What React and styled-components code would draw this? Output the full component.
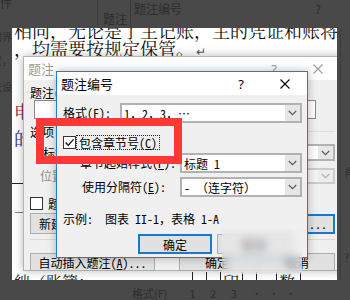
import React from 'react';
import styled, { createGlobalStyle } from 'styled-components';

const GlobalStyle = createGlobalStyle`
  html, body {
    margin: 0;
    padding: 0;
    background: #494949;
  }
  body {
    font-family: "Noto Sans CJK SC", "Noto Sans", sans-serif;
  }
`;

const uiFont = `"Noto Sans Mono CJK SC", "Noto Sans CJK SC", sans-serif`;
const docFont = `"Noto Serif CJK SC", "Noto Sans CJK SC", serif`;

const Stage = styled.div`
  position: relative;
  width: 350px;
  height: 300px;
  overflow: hidden;
  background: #494949;
  display: grid;
  grid-template-columns: 12px 325px 1fr;
  grid-template-rows: 28px 252px 1fr;
`;

/* ---------- dimmed surroundings ---------- */

const TopBand = styled.div`
  grid-column: 1 / -1;
  display: flex;
  color: #2d2d2d;
  font-size: 12px;
  line-height: 14px;
`;

const BandCell = styled.div`
  width: ${(p) => (p.$w ? `${p.$w}px` : 'auto')};
  flex: ${(p) => (p.$w ? 'none' : '1')};
  display: flex;
  align-items: ${(p) => p.$align || 'flex-start'};
  justify-content: space-between;
  padding: ${(p) => p.$pad || '0'};
  box-sizing: border-box;
  overflow: hidden;
`;

const BandLine = styled.div`
  width: 1px;
  background: #3a3a3a;
`;

const LeftBand = styled.div`
  grid-row: 2;
  grid-column: 1;
  display: flex;
  flex-direction: column;
  align-items: flex-end;
  overflow: hidden;
  color: #2f2f2f;
  font-size: 10px;
  line-height: 12px;
  white-space: nowrap;
`;

const BandText = styled.div`
  margin-top: ${(p) => p.$mt || 0}px;
`;

const RightBand = styled.div`
  grid-row: 2;
  grid-column: 3;
  display: flex;
  flex-direction: column;
  color: #2f2f2f;
  font-size: 11px;
  line-height: 13px;
  padding-left: 3px;
  border-left: 1px solid #3d3d3d;
  margin-left: 3px;
`;

const BottomBand = styled.div`
  grid-column: 1 / -1;
  display: flex;
  align-items: flex-end;
  color: #2d2d2d;
  font-size: 11px;
  line-height: 14px;
  overflow: hidden;
`;

const BottomItem = styled.span`
  margin-left: ${(p) => p.$ml}px;
  letter-spacing: ${(p) => p.$ls || 0}px;
`;

/* ---------- document page ---------- */

const Page = styled.div`
  grid-row: 2;
  grid-column: 2;
  position: relative;
  overflow: hidden;
  background: #ffffff;
  display: flex;
  flex-direction: column;
  font-family: ${docFont};
  color: #111;
`;

const DocLine = styled.div`
  font-size: 18px;
  line-height: 18px;
  height: 18px;
  white-space: nowrap;
  padding-left: 2px;
  margin-top: ${(p) => p.$mt || 0}px;
  color: ${(p) => p.$color || '#111'};
`;

const ParaMark = styled.span`
  font-size: 12px;
  color: #555;
  margin-left: 2px;
`;

const TableRule = styled.div`
  width: 12px;
  border-top: 1px solid #222;
  margin-top: ${(p) => p.$mt}px;
`;

const TableStrip = styled.div`
  margin-top: auto;
  margin-bottom: -11px;
  height: 19px;
  display: flex;
  font-size: 16px;
  line-height: 19px;
  white-space: nowrap;
`;

const TableCell = styled.div`
  width: ${(p) => p.$w}px;
  flex: none;
  border-left: ${(p) => (p.$line ? '1px solid #222' : 'none')};
  padding-left: 2px;
  box-sizing: border-box;
`;

/* ---------- dialogs ---------- */

const Dialog = styled.div`
  position: absolute;
  left: ${(p) => p.$x}px;
  top: ${(p) => p.$y}px;
  width: ${(p) => p.$w}px;
  height: ${(p) => p.$h}px;
  box-sizing: border-box;
  border: 1px solid ${(p) => (p.$active ? '#1a80d6' : '#b4b4b4')};
  background: #f0f0f0;
  box-shadow: 0 0 9px rgba(0, 0, 0, 0.28);
  display: flex;
  flex-direction: column;
  font-family: ${uiFont};
  font-size: 12px;
  color: #000;
`;

const TitleBar = styled.div`
  height: ${(p) => p.$h}px;
  flex: none;
  background: #ffffff;
  display: flex;
  align-items: center;
  padding: 0 ${(p) => p.$pr}px 0 4px;
  color: ${(p) => (p.$dim ? '#9c9c9c' : '#000')};
`;

const TitleText = styled.div`
  flex: 1;
  font-family: "Noto Sans CJK SC", sans-serif;
  font-size: 13px;
  line-height: 16px;
`;

const TitleButton = styled.div`
  width: 44px;
  display: flex;
  justify-content: center;
  align-items: center;
  font-family: "Noto Sans", sans-serif;
  font-size: 13px;
`;

const Body = styled.div`
  flex: 1;
  display: flex;
  flex-direction: column;
  padding: ${(p) => p.$pad};
`;

const Row = styled.div`
  display: flex;
  align-items: center;
  height: ${(p) => p.$h}px;
  margin-top: ${(p) => p.$mt || 0}px;
  justify-content: ${(p) => p.$justify || 'flex-start'};
  gap: ${(p) => p.$gap || 0}px;
  flex: none;
`;

const Label = styled.div`
  width: ${(p) => (p.$w ? `${p.$w}px` : 'auto')};
  padding-left: ${(p) => p.$indent || 0}px;
  box-sizing: border-box;
  white-space: nowrap;
  line-height: 14px;
  color: ${(p) => (p.$disabled ? '#8d8d8d' : '#000')};
`;

const Key = styled.span`
  text-decoration: underline;
  text-underline-offset: 1px;
`;

const Combo = styled.div`
  width: ${(p) => p.$w}px;
  height: ${(p) => p.$h || 20}px;
  margin-left: ${(p) => (p.$right ? 'auto' : '0')};
  box-sizing: border-box;
  border: 2px solid ${(p) => (p.$disabled ? '#cccccc' : '#b2b2b2')};
  background: ${(p) => (p.$disabled ? '#f4f4f4' : '#ffffff')};
  display: flex;
  align-items: stretch;
  flex: none;
`;

const ComboText = styled.div`
  flex: 1;
  padding-left: 2px;
  display: flex;
  align-items: center;
  white-space: nowrap;
  overflow: hidden;
`;

const ComboArrow = styled.div`
  width: 15px;
  background: ${(p) => (p.$disabled ? '#ececec' : '#e6e6e6')};
  display: flex;
  align-items: center;
  justify-content: center;
`;

const TextBox = styled.div`
  width: ${(p) => p.$w}px;
  height: 19px;
  margin-left: 4px;
  box-sizing: border-box;
  border: 1px solid #8a8a8a;
  background: #fff;
  flex: none;
`;

const Group = styled.div`
  display: flex;
  align-items: center;
  height: 13px;
  margin-top: ${(p) => p.$mt}px;
  line-height: 13px;
  &::after {
    content: '';
    flex: 1;
    margin-left: 6px;
    border-top: 1px solid #dcdcdc;
  }
`;

const Box = styled.div`
  width: 13px;
  height: 13px;
  flex: none;
  box-sizing: border-box;
  border: 1px solid #333;
  background: #fff;
  display: flex;
  align-items: center;
  justify-content: center;
`;

const CheckLabel = styled.div`
  margin-left: ${(p) => p.$ml || 3}px;
  padding: 0 2px;
  line-height: 13px;
  white-space: nowrap;
  outline: ${(p) => (p.$focus ? '1px dotted #222' : 'none')};
`;

const Button = styled.div`
  width: ${(p) => p.$w}px;
  height: ${(p) => p.$h || 19}px;
  margin-left: ${(p) => (p.$push ? 'auto' : '0')};
  box-sizing: border-box;
  border: ${(p) => (p.$focus ? '2px solid #1678d2' : '1px solid #adadad')};
  background: #e1e1e1;
  display: flex;
  align-items: center;
  justify-content: ${(p) => (p.$start ? 'flex-start' : 'center')};
  padding-left: ${(p) => (p.$start ? '8px' : '0')};
  white-space: nowrap;
  flex: none;
  overflow: hidden;
`;

const Rule = styled.div`
  margin-top: ${(p) => p.$mt}px;
  border-top: 1px solid #d9d9d9;
  flex: none;
`;

const Example = styled.div`
  margin-top: ${(p) => p.$mt}px;
  line-height: 15px;
  white-space: pre;
  flex: none;
`;

/* ---------- overlays ---------- */

const Highlight = styled.div`
  position: absolute;
  left: 36px;
  top: 118px;
  width: 146px;
  height: 46px;
  box-sizing: border-box;
  border: 8px solid #fd3838;
  pointer-events: none;
`;

const Smudge = styled.div`
  position: absolute;
  left: 222px;
  top: 229px;
  width: 80px;
  height: 45px;
  backdrop-filter: blur(4px);
  background: rgba(238, 238, 238, 0.45);
`;

/* ---------- icons ---------- */

const CloseIcon = ({ color = '#000' }) => (
  <svg width="10" height="10" viewBox="0 0 10 10">
    <path d="M0.5 0.5 L9.5 9.5 M9.5 0.5 L0.5 9.5" stroke={color} strokeWidth="1.1" fill="none" />
  </svg>
);

const Chevron = ({ color = '#5a5a5a' }) => (
  <svg width="9" height="6" viewBox="0 0 9 6">
    <path d="M0.8 1 L4.5 4.6 L8.2 1" stroke={color} strokeWidth="1.2" fill="none" />
  </svg>
);

const Tick = () => (
  <svg width="11" height="11" viewBox="0 0 11 11">
    <path d="M1.6 5.6 L4.2 8.3 L9.6 2.4" stroke="#1e1e1e" strokeWidth="1.4" fill="none" />
  </svg>
);

function ComboBox({ w, h, children, disabled, right }) {
  return (
    <Combo $w={w} $h={h} $disabled={disabled} $right={right}>
      <ComboText>{children}</ComboText>
      <ComboArrow $disabled={disabled}>
        <Chevron color={disabled ? '#b0b0b0' : '#5a5a5a'} />
      </ComboArrow>
    </Combo>
  );
}

function CaptionDialog() {
  return (
    <Dialog $x={11} $y={28} $w={322} $h={215}>
      <TitleBar $h={23} $pr={4} $dim>
        <TitleText>题注</TitleText>
        <TitleButton>?</TitleButton>
        <TitleButton>
          <CloseIcon color="#9c9c9c" />
        </TitleButton>
      </TitleBar>
      <Body $pad="6px 9px 0 6px">
        <Label>
          题注(<Key>C</Key>):
        </Label>
        <Row $h={19}>
          <TextBox $w={282} />
        </Row>
        <Group $mt={6}>选项</Group>
        <Row $h={17} $mt={6}>
          <Label $indent={13}>
            标签(<Key>L</Key>):
          </Label>
          <ComboBox w={235} h={17} right />
        </Row>
        <Row $h={16} $mt={7}>
          <Label $indent={10} $disabled>
            位置(<Key>P</Key>):
          </Label>
          <ComboBox w={235} h={16} right disabled />
        </Row>
        <Row $h={13} $mt={13}>
          <Box />
          <CheckLabel>题注</CheckLabel>
        </Row>
        <Row $h={21} $mt={3} $justify="space-between">
          <Button $w={95} $h={21} $start>
            新建
          </Button>
          <Button $w={76} $h={20} $focus>
            编号(<Key>U</Key>)...
          </Button>
        </Row>
        <Rule $mt={5} />
        <Row $h={18} $mt={13} $gap={4}>
          <Button $w={125} $h={18}>
            自动插入题注(<Key>A</Key>)...
          </Button>
          <Button $w={76} $h={18} $push>
            确定
          </Button>
          <Button $w={76} $h={18}>
            取消
          </Button>
        </Row>
      </Body>
    </Dialog>
  );
}

function NumberingDialog() {
  return (
    <Dialog $x={44} $y={43} $w={252} $h={187} $active>
      <TitleBar $h={23} $pr={0}>
        <TitleText>题注编号</TitleText>
        <TitleButton>?</TitleButton>
        <TitleButton>
          <CloseIcon />
        </TitleButton>
      </TitleBar>
      <Body $pad="8px 5px 0 6px">
        <Row $h={20}>
          <Label $w={57}>
            格式(<Key>F</Key>):
          </Label>
          <ComboBox w={182}>1，2，3，…</ComboBox>
        </Row>
        <Row $h={15} $mt={12}>
          <Box>
            <Tick />
          </Box>
          <CheckLabel $ml={1} $focus>
            包含章节号(<Key>C</Key>)
          </CheckLabel>
        </Row>
        <Row $h={20} $mt={3}>
          <Label $w={117} $indent={17}>
            章节起始样式(<Key>P</Key>):
          </Label>
          <ComboBox w={122}>标题 1</ComboBox>
        </Row>
        <Row $h={20} $mt={4}>
          <Label $w={117} $indent={19}>
            使用分隔符(<Key>E</Key>):
          </Label>
          <ComboBox w={122}>-  （连字符）</ComboBox>
        </Row>
        <Example $mt={14}>示例:  图表 II-1，表格 1-A</Example>
        <Row $h={20} $mt={8} $justify="flex-end" $gap={5}>
          <Button $w={74} $h={20} $focus>
            确定
          </Button>
          <Button $w={74} $h={20}>
            取消
          </Button>
          <span style={{ width: 6 }} />
        </Row>
      </Body>
    </Dialog>
  );
}

export default function App() {
  return (
    <>
      <GlobalStyle />
      <Stage>
        <TopBand>
          <BandCell $w={97}>
            <span style={{ marginTop: -4 }}>件</span>
          </BandCell>
          <BandLine />
          <BandCell $w={32} $align="flex-end" $pad="0 0 2px 5px">
            题注
          </BandCell>
          <BandLine />
          <BandCell $pad="2px 34px 0 3px">
            <span>题注编号</span>
            <span>?</span>
          </BandCell>
        </TopBand>

        <LeftBand>
          <BandText $mt={3}>如界</BandText>
          <BandText $mt={12}>数置，</BandText>
          <BandText $mt={14}>去设</BandText>
        </LeftBand>

        <Page>
          <DocLine $mt={-7}>相同，无论是了主记账，主的凭证和账将</DocLine>
          <DocLine>
            ，均需要按规定保管。<ParaMark>↵</ParaMark>
          </DocLine>
          <DocLine $mt={45} $color="#7a2246">
            电
          </DocLine>
          <DocLine $mt={9} $color="#3a2a7a">
            的
          </DocLine>
          <TableRule $mt={36} />
          <DocLine $mt={19}>一算</DocLine>
          <TableStrip>
            <TableCell $w={180}>絀（账簿：</TableCell>
            <TableCell $w={14} $line />
            <TableCell $w={14} $line />
            <TableCell $w={22} $line>印</TableCell>
            <TableCell $w={14} $line />
            <TableCell $w={20} $line />
            <TableCell $w={24} $line>数</TableCell>
            <TableCell $w={37} $line />
          </TableStrip>

          <CaptionDialog />
          <NumberingDialog />
        </Page>

        <RightBand>
          <BandText $mt={138}>肖</BandText>
          <BandText $mt={72}>?</BandText>
        </RightBand>

        <BottomBand>
          <BottomItem $ml={132}>格式(F)</BottomItem>
          <BottomItem $ml={22} $ls={6}>
            1 2 3 ···
          </BottomItem>
        </BottomBand>

        <Highlight />
        <Smudge />
      </Stage>
    </>
  );
}
